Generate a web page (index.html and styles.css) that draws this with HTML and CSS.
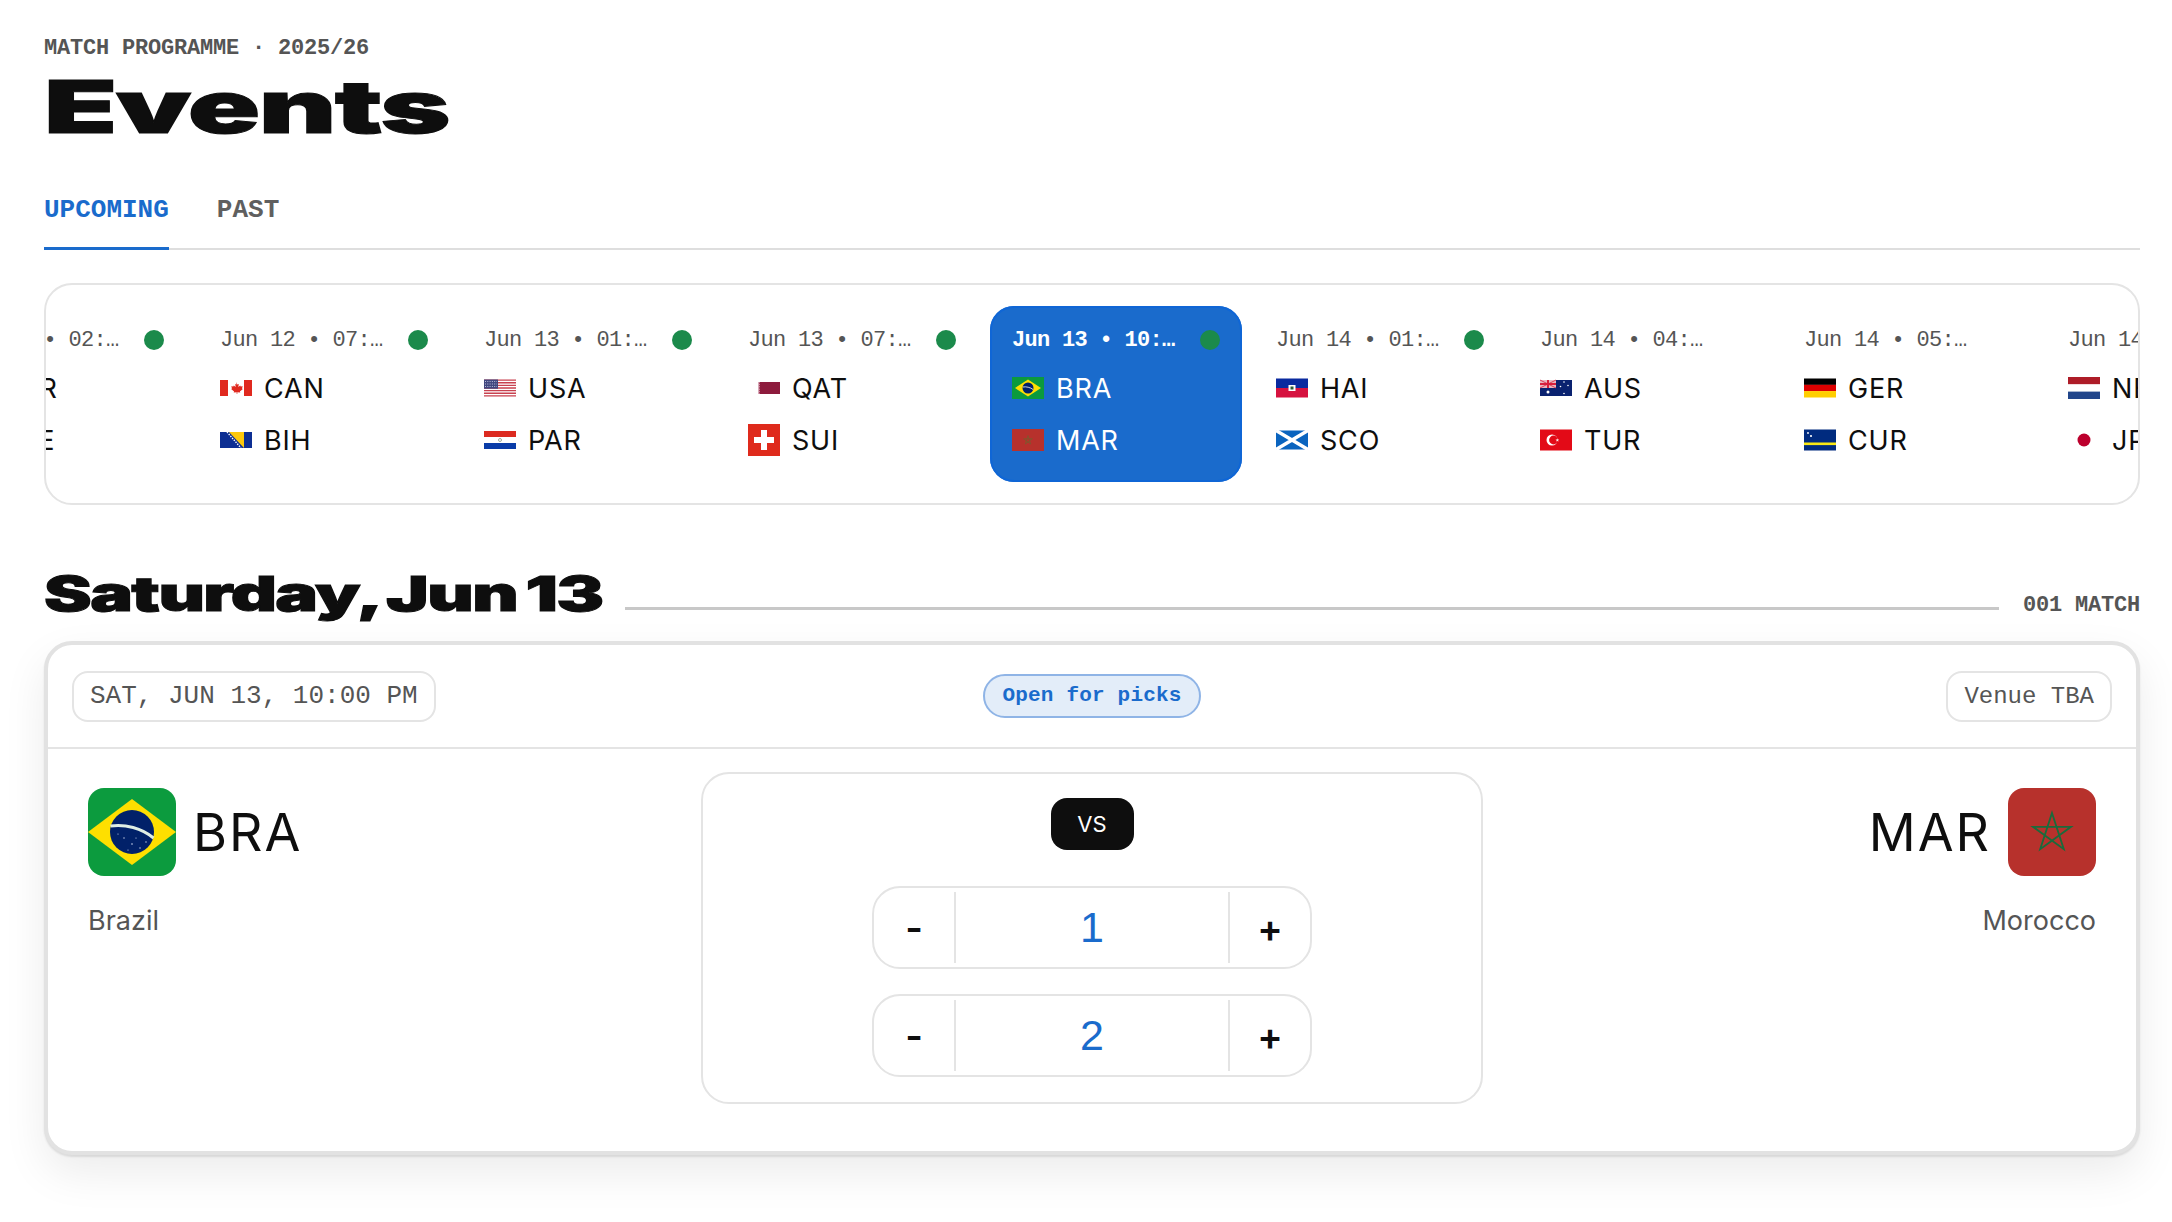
FILE: index.html
```html
<!DOCTYPE html>
<html lang="en">
<head>
  <meta charset="UTF-8">
  <title>Events</title>
  <link rel="stylesheet" href="styles.css">
</head>
<body>
  <!-- flag drawings, reused by the rail and the match card -->
  <svg class="flag-defs" aria-hidden="true">
    <symbol id="f-can" viewBox="0 0 32 32">
      <rect y="8" width="32" height="16" fill="#fff"/>
      <rect y="8" width="8" height="16" fill="#e0291f"/>
      <rect x="24" y="8" width="8" height="16" fill="#e0291f"/>
      <path d="M16 10l1.4 2.6 1.4-.7-.5 3.2 1.9-1.6.5 1.1 2-.3-.7 2.1.9.5-3 2.5.4 1.2-3-.4V22h-.6v-1.8l-3 .4.4-1.2-3-2.5.9-.5-.7-2.1 2 .3.5-1.1 1.9 1.6-.5-3.2 1.4.7z" fill="#e0291f"/>
    </symbol>
    <symbol id="f-bih" viewBox="0 0 32 32">
      <rect y="8" width="32" height="16" fill="#0d2f93"/>
      <path d="M9 8h15v16z" fill="#fcc80d"/>
      <path d="M7 8l14 16" stroke="#fff" stroke-width="1.4" stroke-dasharray="1.4 1.2"/>
    </symbol>
    <symbol id="f-usa" viewBox="0 0 32 32">
      <rect y="7.5" width="32" height="17" fill="#fff"/>
      <path d="M0 8.15h32M0 10.77h32M0 13.38h32M0 16h32M0 18.62h32M0 21.23h32M0 23.85h32" stroke="#c8414f" stroke-width="1.3"/>
      <rect y="7.5" width="14" height="9.2" fill="#41477f"/>
      <path d="M1 9.5h12M1 12h12M1 14.5h12" stroke="#c5c8e2" stroke-width=".9" stroke-dasharray="1 1.3"/>
    </symbol>
    <symbol id="f-par" viewBox="0 0 32 32">
      <rect y="7" width="32" height="6" fill="#dc2a20"/>
      <rect y="13" width="32" height="6" fill="#fff"/>
      <rect y="19" width="32" height="6" fill="#0a3ca8"/>
      <circle cx="16" cy="16" r="1.5" fill="none" stroke="#7a8a72" stroke-width=".7"/>
    </symbol>
    <symbol id="f-qat" viewBox="0 0 32 32">
      <rect x="10" y="10" width="22" height="12" fill="#8d1b3d"/>
      <path d="M10 10h2l-1 1.2 1 1.2-1 1.2 1 1.2-1 1.2 1 1.2-1 1.2 1 1.2-1 1.2 1 1.2h-2z" fill="#d9a8b8"/>
    </symbol>
    <symbol id="f-sui" viewBox="0 0 32 32">
      <rect width="32" height="32" fill="#df2a1c"/>
      <path d="M13 6h6v7h7v6h-7v7h-6v-7H6v-6h7z" fill="#fff"/>
    </symbol>
    <symbol id="f-bra" viewBox="0 0 32 32">
      <rect y="5" width="32" height="22" fill="#0b9a3d"/>
      <path d="M16 7.5L29 16 16 24.5 3 16z" fill="#fedf00"/>
      <circle cx="16" cy="16" r="5.5" fill="#012169"/>
      <path d="M10.8 15c3.5-.6 7.5.4 10.3 2.5" stroke="#fff" stroke-width=".8" fill="none"/>
    </symbol>
    <symbol id="f-mar" viewBox="0 0 32 32">
      <rect y="5" width="32" height="22" fill="#b7312c"/>
      <path d="M16 11.5l2.6 8.5-6.9-5.2h8.6L13.4 20z" fill="none" stroke="#7a5a2c" stroke-width=".8"/>
    </symbol>
    <symbol id="f-hai" viewBox="0 0 32 32">
      <rect y="6.5" width="32" height="9.5" fill="#0a2a9f"/>
      <rect y="16" width="32" height="9.5" fill="#d6123f"/>
      <rect x="12.5" y="13" width="7" height="6" fill="#fff"/>
      <rect x="14.5" y="14.5" width="3" height="3" fill="#2c5a34"/>
    </symbol>
    <symbol id="f-sco" viewBox="0 0 32 32">
      <rect y="6.5" width="32" height="19" fill="#0a64bf"/>
      <path d="M0 6.5l32 19M32 6.5l-32 19" stroke="#fff" stroke-width="3.6"/>
    </symbol>
    <symbol id="f-aus" viewBox="0 0 32 32">
      <rect y="8" width="32" height="16" fill="#0a2270"/>
      <rect y="8" width="16" height="8" fill="#e8b8c0"/>
      <path d="M8 8v8M0 12h16" stroke="#d8203c" stroke-width="2"/>
      <path d="M0 8l16 8M16 8L0 16" stroke="#d8203c" stroke-width=".8"/>
      <g fill="#fff"><circle cx="8" cy="20" r="1.5"/><circle cx="24" cy="10" r=".8"/><circle cx="24" cy="21.5" r=".8"/><circle cx="20.5" cy="14.5" r=".8"/><circle cx="28" cy="13.5" r=".8"/></g>
    </symbol>
    <symbol id="f-tur" viewBox="0 0 32 32">
      <rect y="5.5" width="32" height="21" fill="#e30a17"/>
      <circle cx="12" cy="16" r="5.5" fill="#fff"/>
      <circle cx="13.5" cy="16" r="4.4" fill="#e30a17"/>
      <path d="M17 14.2l.6 1.3 1.4-.3-.9 1 .7 1.2-1.3-.6-1 1 .2-1.4-1.2-.6 1.4-.2z" fill="#fff"/>
    </symbol>
    <symbol id="f-ger" viewBox="0 0 32 32">
      <rect y="6.5" width="32" height="6.4" fill="#000"/>
      <rect y="12.8" width="32" height="6.4" fill="#dd0000"/>
      <rect y="19.1" width="32" height="6.4" fill="#ffce00"/>
    </symbol>
    <symbol id="f-cur" viewBox="0 0 32 32">
      <rect y="5.5" width="32" height="21" fill="#002b7f"/>
      <rect y="18.5" width="32" height="2.6" fill="#f9e814"/>
      <circle cx="4" cy="9" r=".9" fill="#fff"/>
      <circle cx="7" cy="12" r="1.1" fill="#fff"/>
    </symbol>
    <symbol id="f-ned" viewBox="0 0 32 32">
      <rect y="5" width="32" height="7.4" fill="#ae1c28"/>
      <rect y="12.4" width="32" height="7.2" fill="#fff"/>
      <rect y="19.6" width="32" height="7.4" fill="#21468b"/>
    </symbol>
    <symbol id="f-jpn" viewBox="0 0 32 32">
      <circle cx="16" cy="16" r="6.5" fill="#bc002d"/>
    </symbol>
    <symbol id="f-bra-lg" viewBox="0 0 88 88">
      <rect width="88" height="88" fill="#0c9b3e"/>
      <path d="M44 11L88 44 44 77 0 44z" fill="#fedf00"/>
      <circle cx="44" cy="44" r="22" fill="#012169"/>
      <path d="M22.5 38c15-2 31 2 43 12" stroke="#dfeee4" stroke-width="3" fill="none"/>
      <g fill="#cfd8ee"><circle cx="36" cy="50" r=".7"/><circle cx="44" cy="56" r=".8"/><circle cx="52" cy="60" r=".7"/><circle cx="58" cy="54" r=".7"/><circle cx="30" cy="46" r=".6"/><circle cx="48" cy="50" r=".6"/><circle cx="40" cy="62" r=".6"/></g>
    </symbol>
    <symbol id="f-mar-lg" viewBox="0 0 88 88">
      <rect width="88" height="88" fill="#b7312c"/>
      <path d="M44 25l11.8 36.2-30.8-22.4h38l-30.8 22.4z" fill="none" stroke="#1a6b3c" stroke-width="1.8"/>
    </symbol>
  </svg>

  <main class="page">
    <p class="eyebrow">MATCH PROGRAMME · 2025/26</p>
    <h1 class="page-title">Events</h1>

    <nav class="tabs">
      <a class="tab tab-active">UPCOMING</a>
      <a class="tab">PAST</a>
    </nav>

    <section class="rail">
      <div class="rail-track">
        <article class="fixture">
          <div class="fixture-top"><span class="fixture-date">Jun 12 • 02:…</span><i class="live-dot"></i></div>
          <div class="fixture-team"><span class="flag-slot"></span><span>KOR</span></div>
          <div class="fixture-team"><span class="flag-slot"></span><span>CZE</span></div>
        </article>
        <article class="fixture">
          <div class="fixture-top"><span class="fixture-date">Jun 12 • 07:…</span><i class="live-dot"></i></div>
          <div class="fixture-team"><svg class="flag"><use href="#f-can"/></svg><span>CAN</span></div>
          <div class="fixture-team"><svg class="flag"><use href="#f-bih"/></svg><span>BIH</span></div>
        </article>
        <article class="fixture">
          <div class="fixture-top"><span class="fixture-date">Jun 13 • 01:…</span><i class="live-dot"></i></div>
          <div class="fixture-team"><svg class="flag"><use href="#f-usa"/></svg><span>USA</span></div>
          <div class="fixture-team"><svg class="flag"><use href="#f-par"/></svg><span>PAR</span></div>
        </article>
        <article class="fixture">
          <div class="fixture-top"><span class="fixture-date">Jun 13 • 07:…</span><i class="live-dot"></i></div>
          <div class="fixture-team"><svg class="flag"><use href="#f-qat"/></svg><span>QAT</span></div>
          <div class="fixture-team"><svg class="flag"><use href="#f-sui"/></svg><span>SUI</span></div>
        </article>
        <article class="fixture fixture-active">
          <div class="fixture-top"><span class="fixture-date">Jun 13 • 10:…</span><i class="live-dot"></i></div>
          <div class="fixture-team"><svg class="flag"><use href="#f-bra"/></svg><span>BRA</span></div>
          <div class="fixture-team"><svg class="flag"><use href="#f-mar"/></svg><span>MAR</span></div>
        </article>
        <article class="fixture">
          <div class="fixture-top"><span class="fixture-date">Jun 14 • 01:…</span><i class="live-dot"></i></div>
          <div class="fixture-team"><svg class="flag"><use href="#f-hai"/></svg><span>HAI</span></div>
          <div class="fixture-team"><svg class="flag"><use href="#f-sco"/></svg><span>SCO</span></div>
        </article>
        <article class="fixture">
          <div class="fixture-top"><span class="fixture-date">Jun 14 • 04:…</span></div>
          <div class="fixture-team"><svg class="flag"><use href="#f-aus"/></svg><span>AUS</span></div>
          <div class="fixture-team"><svg class="flag"><use href="#f-tur"/></svg><span>TUR</span></div>
        </article>
        <article class="fixture">
          <div class="fixture-top"><span class="fixture-date">Jun 14 • 05:…</span></div>
          <div class="fixture-team"><svg class="flag"><use href="#f-ger"/></svg><span>GER</span></div>
          <div class="fixture-team"><svg class="flag"><use href="#f-cur"/></svg><span>CUR</span></div>
        </article>
        <article class="fixture">
          <div class="fixture-top"><span class="fixture-date">Jun 14 • 07:…</span></div>
          <div class="fixture-team"><svg class="flag"><use href="#f-ned"/></svg><span>NED</span></div>
          <div class="fixture-team"><svg class="flag"><use href="#f-jpn"/></svg><span>JPN</span></div>
        </article>
      </div>
    </section>

    <header class="day-head">
      <h2 class="day-title">Saturday, Jun 13</h2>
      <span class="day-rule"></span>
      <span class="day-count">001 MATCH</span>
    </header>

    <section class="match">
      <div class="match-bar">
        <span class="chip chip-date">SAT, JUN 13, 10:00 PM</span>
        <span class="status">Open for picks</span>
        <span class="chip chip-venue">Venue TBA</span>
      </div>
      <div class="match-body">
        <div class="team">
          <div class="team-main">
            <svg class="team-flag"><use href="#f-bra-lg"/></svg>
            <span class="team-code">BRA</span>
          </div>
          <p class="team-name">Brazil</p>
        </div>

        <div class="score-panel">
          <span class="vs">VS</span>
          <div class="stepper">
            <button class="step" type="button">-</button>
            <output class="step-value">1</output>
            <button class="step" type="button">+</button>
          </div>
          <div class="stepper">
            <button class="step" type="button">-</button>
            <output class="step-value">2</output>
            <button class="step" type="button">+</button>
          </div>
        </div>

        <div class="team team-away">
          <div class="team-main">
            <span class="team-code">MAR</span>
            <svg class="team-flag"><use href="#f-mar-lg"/></svg>
          </div>
          <p class="team-name">Morocco</p>
        </div>
      </div>
    </section>
  </main>
</body>
</html>
```

FILE: styles.css
```css
/* page */
body {
  margin: 0;
  background: #fff;
  color: #0e0e0e;
  font-family: Inter, "Liberation Sans", sans-serif;
  overflow: hidden;
}

.flag-defs {
  display: none;
}

.page {
  padding: 38px 32px 60px 44px;
}

/* title block */
.eyebrow {
  margin: 0;
  font-family: "Liberation Mono", monospace;
  font-size: 22px;
  line-height: 22px;
  font-weight: 700;
  letter-spacing: -.2px;
  color: #555;
}

.page-title {
  margin: 11px 0 0;
  font-size: 73px;
  line-height: 72px;
  font-weight: 900;
  letter-spacing: -1px;
  transform: scaleX(1.64);
  transform-origin: left center;
  -webkit-text-stroke: 1px #0e0e0e;
  color: #0e0e0e;
}

/* tabs */
.tabs {
  display: flex;
  gap: 48px;
  margin-top: 55px;
  border-bottom: 2px solid #dedede;
}

.tab {
  padding-bottom: 25px;
  margin-bottom: -2px;
  font-family: "Liberation Mono", monospace;
  font-size: 26px;
  line-height: 24px;
  font-weight: 700;
  color: #5f5f5f;
}

.tab-active {
  color: #1a6bcc;
  border-bottom: 3px solid #1a6bcc;
}

/* fixture rail */
.rail {
  margin-top: 33px;
  padding: 21px 0;
  border: 2px solid #e4e4e4;
  border-radius: 28px;
  overflow: hidden;
}

.rail-track {
  display: flex;
  gap: 12px;
  /* scroll position of the rail */
  margin-left: -112px;
}

.fixture {
  flex: 0 0 252px;
  box-sizing: border-box;
  padding: 24px 22px 26px;
  border-radius: 24px;
}

.fixture-active {
  background: #1a6bcc;
  box-shadow: inset 0 0 0 2px #0f66d6;
  color: #fff;
}

.fixture-top {
  display: flex;
  justify-content: space-between;
  align-items: center;
  height: 20px;
  margin-bottom: 22px;
}

.fixture-date {
  font-family: "Liberation Mono", monospace;
  font-size: 22px;
  letter-spacing: -.7px;
  color: #555;
  white-space: nowrap;
}

.fixture-active .fixture-date {
  color: #fff;
  font-weight: 700;
}

.live-dot {
  width: 20px;
  height: 20px;
  border-radius: 50%;
  background: #1b8a4b;
}

.fixture-team {
  display: flex;
  align-items: center;
  gap: 12px;
  height: 32px;
  font-size: 27px;
  letter-spacing: .8px;
  white-space: nowrap;
}

.fixture-team + .fixture-team {
  margin-top: 20px;
}

.flag,
.flag-slot {
  flex: 0 0 32px;
  width: 32px;
  height: 32px;
}

/* section heading */
.day-head {
  display: flex;
  align-items: center;
  gap: 24px;
  margin-top: 64px;
  height: 52px;
}

.day-title {
  flex: 0 0 557px;
  margin: -2px 0 0;
  font-size: 48px;
  line-height: 52px;
  font-weight: 900;
  letter-spacing: -1px;
  word-spacing: -3px;
  white-space: nowrap;
  transform: scaleX(1.49);
  transform-origin: left center;
  -webkit-text-stroke: 1px #0e0e0e;
}

.day-rule {
  flex: 1;
  height: 3px;
  margin-top: 26px;
  background: #c8c8c8;
}

.day-count {
  font-family: "Liberation Mono", monospace;
  font-size: 22px;
  font-weight: 700;
  letter-spacing: -.2px;
  color: #555;
  margin-top: 20px;
}

/* match card */
.match {
  margin-top: 20px;
  background: #fff;
  border: 4px solid #e2e2e2;
  border-radius: 28px;
  box-shadow: 0 2px 2px rgba(0, 0, 0, .1), 0 18px 44px rgba(0, 0, 0, .08);
}

.match-bar {
  display: grid;
  grid-template-columns: 1fr auto 1fr;
  align-items: center;
  height: 102px;
  padding: 0 24px;
  border-bottom: 2px solid #e4e4e4;
}

.chip {
  display: flex;
  align-items: center;
  box-sizing: border-box;
  height: 51px;
  padding: 0 16px;
  border: 2px solid #e4e4e4;
  border-radius: 16px;
  font-family: "Liberation Mono", monospace;
  font-size: 24px;
  color: #555;
}

.chip-date {
  justify-self: start;
  font-size: 26px;
}

.chip-venue {
  justify-self: end;
}

.status {
  box-sizing: border-box;
  height: 44px;
  padding: 0 17px;
  border: 2px solid #8fb4e6;
  border-radius: 22px;
  background: #e3edf9;
  font-family: "Liberation Mono", monospace;
  font-size: 21px;
  line-height: 40px;
  font-weight: 700;
  letter-spacing: .2px;
  color: #1a6bcc;
}

.match-body {
  display: grid;
  grid-template-columns: 1fr 782px 1fr;
  padding: 23px 40px 47px;
}

.team {
  padding-top: 16px;
}

.team-main {
  display: flex;
  align-items: center;
  gap: 17px;
}

.team-flag {
  flex: 0 0 88px;
  width: 88px;
  height: 88px;
  border-radius: 16px;
}

.team-code {
  font-size: 52px;
  letter-spacing: 2px;
}

.team-name {
  margin: 27px 0 0;
  font-size: 27px;
  line-height: 36px;
  color: #555;
}

.team-away .team-main {
  justify-content: flex-end;
}

.team-away .team-name {
  text-align: right;
}

/* score panel */
.score-panel {
  display: flex;
  flex-direction: column;
  align-items: center;
  gap: 25px;
  box-sizing: border-box;
  padding: 24px 0 25px;
  border: 2px solid #e4e4e4;
  border-radius: 28px;
}

.vs {
  display: flex;
  align-items: center;
  justify-content: center;
  width: 83px;
  height: 52px;
  margin-bottom: 11px;
  border-radius: 16px;
  background: #0e0e0e;
  color: #fff;
  font-size: 22px;
}

.stepper {
  display: flex;
  align-items: stretch;
  box-sizing: border-box;
  width: 440px;
  height: 83px;
  padding: 4px 0;
  border: 2px solid #e4e4e4;
  border-radius: 28px;
}

.step {
  flex: 0 0 80px;
  padding: 0;
  border: none;
  background: none;
  font-family: Inter, sans-serif;
  font-size: 38px;
  font-weight: 600;
  color: #0e0e0e;
}

.step-value {
  flex: 1;
  display: flex;
  align-items: center;
  justify-content: center;
  border-left: 2px solid #e4e4e4;
  border-right: 2px solid #e4e4e4;
  font-family: "Liberation Sans", sans-serif;
  font-size: 43px;
  color: #1a6bcc;
}
```
